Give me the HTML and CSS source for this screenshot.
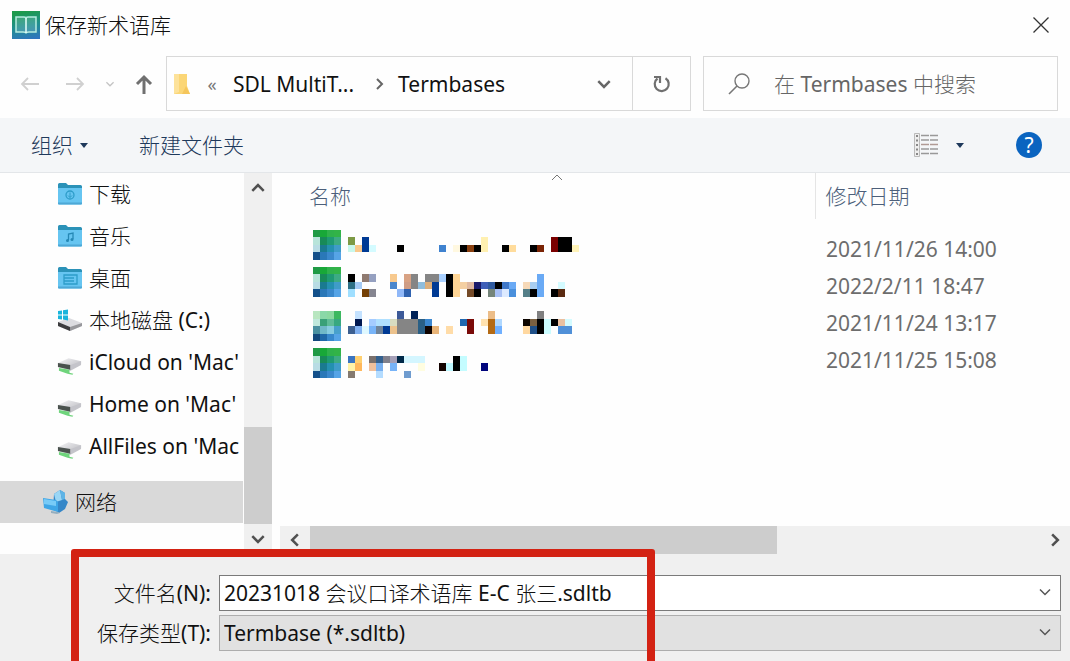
FILE: index.html
```html
<!DOCTYPE html>
<html lang="zh-CN">
<head>
    <meta charset="UTF-8">
    <meta name="viewport" content="width=device-width, initial-scale=1.0">
    <title>保存新术语库</title>
    <link rel="stylesheet" href="styles.css">
</head>
<body>
    <!-- 共用图标 -->
    <svg class="symbols" aria-hidden="true">
        <defs>
            <linearGradient id="appGradient" x1="0.6" y1="0" x2="0.8" y2="1">
                <stop offset="0" stop-color="#1d9a4c"/>
                <stop offset="0.5" stop-color="#1f8f90"/>
                <stop offset="1" stop-color="#2f74c0"/>
            </linearGradient>
            <linearGradient id="driveGradient" x1="0" y1="0" x2="1" y2="1">
                <stop offset="0" stop-color="#f4f4f6"/>
                <stop offset="1" stop-color="#b4b4ba"/>
            </linearGradient>
        </defs>
        <symbol id="chevron" viewBox="0 0 14 14">
            <path d="M2 4.5l5 5 5-5" fill="none" stroke="currentColor"/>
        </symbol>
        <symbol id="folder" viewBox="0 0 25 24">
            <path d="M1 2.5Q1 1 2.500 1H9l2 2h12.500Q25 3 25 4.500V10H1z" fill="#2b92b8"/>
            <path d="M1 6h24v15.500q0 1-1 1H2q-1 0-1-1z" fill="#66c5f1"/>
            <path d="M1 20.500h24v1q0 1-1 1H2q-1 0-1-1z" fill="#4da8d6"/>
        </symbol>
        <symbol id="drive" viewBox="0 0 26 20">
            <path d="M1 7L12 2l13 3v4L14 15 1 11z" fill="url(#driveGradient)"/>
            <path d="M1 7l13 2v5L1 11z" fill="#4a524e"/>
            <path d="M14 9l11-4v3l-11 6z" fill="#c4c4ca"/>
            <path d="M2 12l11 2v3l4 1-1 1-5-1-9-3z" fill="#6fd47c"/>
        </symbol>
    </svg>

    <div class="dialog">
        <header class="title-bar">
            <svg class="app-icon" viewBox="0 0 28 28">
                <rect width="28" height="28" fill="url(#appGradient)"/>
                <path d="M4 6h8q2 0 2 1.500Q14 6 16 6h8v15h-7q-3 0-3 1.500Q14 21 11 21H4z" fill="#ffffff" fill-opacity="0.15" stroke="#b5ecdf" stroke-width="1.500"/>
                <path d="M14 7v15" stroke="#e4fffb" stroke-width="1.500"/>
            </svg>
            <h1>保存新术语库</h1>
            <button type="button" class="close-button" aria-label="关闭">
                <svg viewBox="0 0 16 16"><path d="M0.500 0.500l15 15M15.500 0.500l-15 15" stroke="#333" stroke-width="1.300"/></svg>
            </button>
        </header>

        <div class="address-row">
            <nav class="nav-buttons">
                <button type="button" aria-label="后退"><svg viewBox="0 0 20 16"><path d="M19 8H2M8 2L2 8l6 6" fill="none" stroke="#d0d0d0" stroke-width="1.800"/></svg></button>
                <button type="button" class="forward" aria-label="前进"><svg viewBox="0 0 20 16"><path d="M1 8h17M12 2l6 6-6 6" fill="none" stroke="#d0d0d0" stroke-width="1.800"/></svg></button>
                <button type="button" class="recent" aria-label="最近"><svg viewBox="0 0 14 14"><use href="#chevron" stroke-width="1.800"/></svg></button>
                <button type="button" class="up" aria-label="向上"><svg viewBox="0 0 18 20"><path d="M9 20V3M2 10l7-7 7 7" fill="none" stroke="#707070" stroke-width="3"/></svg></button>
            </nav>
            <div class="address-bar">
                <svg class="path-folder" viewBox="0 0 18 22">
                    <path d="M1 1h13v12l3 8-16 0z" fill="#fbd676"/>
                    <path d="M1 1h5v18l-5 2z" fill="#fde29a"/>
                    <path d="M13 13l4 8H9z" fill="#f5c65c"/>
                </svg>
                <span class="path-more">«</span>
                <a href="#">SDL MultiT...</a>
                <svg class="path-arrow" viewBox="0 0 14 14"><path d="M5 2l5 5-5 5" fill="none" stroke="#666" stroke-width="2"/></svg>
                <a href="#">Termbases</a>
                <button type="button" class="path-drop" aria-label="展开"><svg viewBox="0 0 14 14"><use href="#chevron" stroke-width="2.200"/></svg></button>
                <button type="button" class="refresh" aria-label="刷新">
                    <svg viewBox="0 0 18 18">
                        <path d="M12.500 3.200A7 7 0 1 1 4.500 3.500" fill="none" stroke="#707070" stroke-width="2.200"/>
                        <path d="M1 2h6v6" fill="none" stroke="#707070" stroke-width="2.200"/>
                    </svg>
                </button>
            </div>
            <label class="search-box">
                <svg viewBox="0 0 22 22"><circle cx="14" cy="8" r="7" fill="none" stroke="#777" stroke-width="1.400"/><path d="M9 13l-8 8" stroke="#777" stroke-width="1.600"/></svg>
                <input type="text" placeholder="在 Termbases 中搜索" aria-label="搜索">
            </label>
        </div>

        <div class="toolbar">
            <button type="button" class="organize">组织<span class="triangle"></span></button>
            <button type="button">新建文件夹</button>
            <button type="button" class="view-button" aria-label="更改视图">
                <svg viewBox="0 0 26 24">
                    <path d="M0.500 0.500h5v23h-5z" fill="#eee" stroke="#bbb"/>
                    <path d="M2 3h2M2 7.500h2M2 12h2M2 16.500h2M2 21h2" stroke="#888" stroke-width="2"/>
                    <path d="M7 2.500h18M7 7h18M7 16h18M7 20.500h18" stroke="#999" stroke-width="1.300" stroke-dasharray="8 1"/>
                    <path d="M7 11.500h18" stroke="#b09a94" stroke-width="1.300" stroke-dasharray="8 1"/>
                </svg>
                <span class="triangle"></span>
            </button>
            <button type="button" class="help-button" aria-label="帮助">?</button>
        </div>

        <main class="browser">
            <aside class="sidebar">
                <ul class="tree">
                    <li><svg class="tree-icon" viewBox="0 0 25 24"><use href="#folder"/><circle cx="13" cy="13" r="4" fill="none" stroke="#2d9cc9" stroke-width="1.300"/><path d="M13 10.500v5M11 13.500l2 2 2-2" fill="none" stroke="#2d9cc9"/></svg>下载</li>
                    <li><svg class="tree-icon" viewBox="0 0 25 24"><use href="#folder"/><path d="M11.500 16v-6l4.500-1v6" fill="none" stroke="#2588b5" stroke-width="1.300"/><circle cx="10.500" cy="16.500" r="1.500" fill="#2588b5"/><circle cx="15" cy="15.500" r="1.500" fill="#2588b5"/></svg>音乐</li>
                    <li><svg class="tree-icon" viewBox="0 0 25 24"><use href="#folder"/><path d="M7 9h13v9H7zM7 12h10M7 15h10" fill="none" stroke="#2d9cc9" stroke-width="1.300"/></svg>桌面</li>
                    <li>
                        <svg class="tree-icon" viewBox="0 0 25 24">
                            <path d="M1 14l11-4 13 5v3l-12 5-12-5z" fill="#dcdce0"/>
                            <path d="M1 14l12 5v4L1 18z" fill="#3c3c3e"/>
                            <path d="M13 19l12-4v3l-12 5z" fill="#98989c"/>
                            <path d="M1 3l4-.6v4H1zM6 2.200L11 1.500v4.900H6zM1 7.400h4v4L1 11zM6 7.400h5v5l-5-.8z" fill="#19b5dc"/>
                        </svg>本地磁盘 (C:)
                    </li>
                    <li><svg class="tree-icon drive" viewBox="0 0 26 20"><use href="#drive"/></svg>iCloud on 'Mac'</li>
                    <li><svg class="tree-icon drive" viewBox="0 0 26 20"><use href="#drive"/></svg>Home on 'Mac'</li>
                    <li><svg class="tree-icon drive" viewBox="0 0 26 20"><use href="#drive"/></svg>AllFiles on 'Mac</li>
                    <li class="network">
                        <svg class="tree-icon" viewBox="0 0 25 24">
                            <path d="M11 4l6-4 5 3v6l3 3-3 7-6 4-6-4z" fill="#3587c8"/>
                            <path d="M11 4l6-4 2 10-6 2z" fill="#9ad6f5"/>
                            <path d="M17 0l5 3v6l-3 1z" fill="#5fb4e6"/>
                            <path d="M0 8l13 2 2 2v10L1 18z" fill="#3fa6e6"/>
                            <path d="M1 9l12 2v5L1 14z" fill="#78cbf7"/>
                            <path d="M8 21l7 1 2 1-3 1-6-1z" fill="#94aebf"/>
                        </svg>网络
                    </li>
                </ul>
                <div class="scroll-y">
                    <button type="button" aria-label="向上滚动"><svg class="flip" viewBox="0 0 14 14"><use href="#chevron" stroke-width="2.200"/></svg></button>
                    <div class="thumb"></div>
                    <button type="button" aria-label="向下滚动"><svg viewBox="0 0 14 14"><use href="#chevron" stroke-width="2.200"/></svg></button>
                </div>
            </aside>

            <section class="file-pane">
                <table class="file-table">
                    <thead>
                        <tr>
                            <th class="name">名称<svg class="sort-arrow" viewBox="0 0 12 7"><path d="M1 6l5-5 5 5" fill="none" stroke="#777"/></svg></th>
                            <th>修改日期</th>
                        </tr>
                    </thead>
                    <tbody>
                        <tr><td><svg class="mosaic" viewBox="0 0 39 5" preserveAspectRatio="none"></svg></td><td>2021/11/26 14:00</td></tr>
                        <tr><td><svg class="mosaic" viewBox="0 0 39 5" preserveAspectRatio="none"></svg></td><td>2022/2/11 18:47</td></tr>
                        <tr><td><svg class="mosaic" viewBox="0 0 39 5" preserveAspectRatio="none"></svg></td><td>2021/11/24 13:17</td></tr>
                        <tr><td><svg class="mosaic" viewBox="0 0 39 5" preserveAspectRatio="none"></svg></td><td>2021/11/25 15:08</td></tr>
                    </tbody>
                </table>
                <div class="scroll-x">
                    <button type="button" aria-label="向左滚动"><svg class="left" viewBox="0 0 14 14"><use href="#chevron" stroke-width="2.200"/></svg></button>
                    <div class="track"><div class="thumb"></div></div>
                    <button type="button" aria-label="向右滚动"><svg class="right" viewBox="0 0 14 14"><use href="#chevron" stroke-width="2.200"/></svg></button>
                </div>
            </section>
        </main>

        <form class="file-form">
            <label for="fileName">文件名(N):</label>
            <div class="field">
                <input type="text" id="fileName" value="20231018 会议口译术语库 E-C 张三.sdltb">
                <svg viewBox="0 0 14 14"><use href="#chevron" stroke-width="1.500"/></svg>
            </div>
            <label for="fileType">保存类型(T):</label>
            <div class="field">
                <select id="fileType">
                    <option>Termbase (*.sdltb)</option>
                </select>
                <svg viewBox="0 0 14 14"><use href="#chevron" stroke-width="1.500"/></svg>
            </div>
            <div class="highlight"></div>
        </form>
    </div>

    <script src="script.js"></script>
</body>
</html>
```
FILE: styles.css
```css
* {
    margin: 0;
    padding: 0;
    box-sizing: border-box;
}

body {
    font-family: 'Noto Sans', 'Noto Sans CJK SC Light', 'Noto Sans CJK SC', sans-serif;
    font-size: 21px;
    line-height: 28px;
    color: #111;
    background-color: #fefefe;
}

button,
input,
select {
    font: inherit;
    color: inherit;
    background: none;
    border: none;
    outline: none;
}

button {
    display: flex;
    align-items: center;
    justify-content: center;
}

svg {
    display: block;
    flex: none;
}

a {
    color: inherit;
    text-decoration: none;
}

.symbols {
    position: absolute;
    width: 0;
    height: 0;
}

.dialog {
    display: flex;
    flex-direction: column;
    min-height: 100vh;
    overflow: hidden;
}

/* 标题栏 */
.title-bar {
    display: flex;
    align-items: center;
    height: 50px;
    padding: 0 20px 0 12px;
    gap: 5px;
}

.title-bar h1 {
    font-size: 21px;
    font-weight: normal;
}

.app-icon {
    width: 28px;
    height: 28px;
}

.close-button {
    width: 18px;
    height: 28px;
    margin-left: auto;
}

.close-button svg {
    width: 16px;
    height: 16px;
}

/* 地址栏 */
.address-row {
    display: flex;
    height: 68px;
    padding: 6px 12px 7px 0;
}

.nav-buttons {
    display: flex;
    align-items: center;
    width: 166px;
    padding-left: 20px;
    gap: 20px;
}

.nav-buttons svg {
    width: 20px;
    height: 16px;
}

.nav-buttons .forward {
    margin-left: 5px;
}

.nav-buttons .recent {
    color: #c4c4c4;
}

.nav-buttons .recent svg {
    width: 10px;
    height: 10px;
}

.nav-buttons .up svg {
    width: 18px;
    height: 20px;
}

.address-bar {
    display: flex;
    align-items: center;
    flex: 1;
    border: 1px solid #d9d9d9;
}

.path-folder {
    width: 18px;
    height: 22px;
    margin-left: 6px;
}

.path-more {
    width: 42px;
    font-size: 18px;
    text-align: center;
    color: #777;
}

.path-arrow {
    width: 14px;
    height: 14px;
    margin: 0 12px 0 18px;
}

.path-drop {
    width: 56px;
    height: 100%;
    margin-left: auto;
    color: #666;
}

.path-drop svg {
    width: 16px;
    height: 16px;
}

.refresh {
    width: 58px;
    height: 100%;
    border-left: 1px solid #d9d9d9;
}

.refresh svg {
    width: 18px;
    height: 18px;
}

.search-box {
    display: flex;
    align-items: center;
    width: 355px;
    margin-left: 12px;
    padding-left: 24px;
    gap: 24px;
    border: 1px solid #d9d9d9;
}

.search-box svg {
    width: 22px;
    height: 22px;
}

.search-box input {
    flex: 1;
    min-width: 0;
}

.search-box input::placeholder {
    color: #666;
}

/* 工具栏 */
.toolbar {
    display: flex;
    align-items: center;
    height: 55px;
    padding: 0 28px 0 31px;
    background-color: #f4f6f8;
    border-bottom: 1px solid #e3e6e9;
    color: #1e395b;
}

.organize {
    gap: 7px;
    margin-right: 51px;
}

.triangle {
    border: 4px solid transparent;
    border-top: 5px solid #1e395b;
    border-bottom: none;
}

.view-button {
    gap: 16px;
    margin-left: auto;
    margin-right: 52px;
}

.view-button svg {
    width: 26px;
    height: 24px;
}

.help-button {
    width: 26px;
    height: 26px;
    border-radius: 50%;
    background-color: #0a64c0;
    color: white;
}

/* 左侧目录树 */
.browser {
    display: flex;
    flex: 1;
}

.sidebar {
    display: flex;
    width: 272px;
    margin-right: 8px;
}

.tree {
    width: 244px;
    list-style: none;
    overflow: hidden;
    border-right: 1px solid #fefefe;
}

.tree li {
    display: flex;
    align-items: center;
    height: 42px;
    padding-left: 57px;
    gap: 7px;
    white-space: nowrap;
}

.tree-icon {
    width: 25px;
    height: 24px;
}

.tree-icon.drive {
    height: 20px;
    margin-top: 8px;
}

.tree .network {
    margin-top: 14px;
    padding-left: 43px;
    background-color: #d9d9d9;
}

.scroll-y {
    display: flex;
    flex-direction: column;
    width: 28px;
    background-color: #f0f0f0;
    color: #505050;
}

.scroll-y button {
    width: 28px;
    height: 30px;
}

.scroll-y .thumb {
    height: 97px;
    margin-top: auto;
    background-color: #cdcdcd;
}

.scroll-y svg,
.scroll-x svg {
    width: 16px;
    height: 16px;
}

.flip {
    transform: rotate(180deg);
}

.left {
    transform: rotate(90deg);
}

.right {
    transform: rotate(-90deg);
}

/* 文件列表 */
.file-pane {
    display: flex;
    flex-direction: column;
    flex: 1;
    min-width: 0;
}

.file-table {
    width: calc(100% - 20px);
    margin-left: 20px;
    table-layout: fixed;
    border-collapse: collapse;
    color: #6d6d6d;
}

.file-table th {
    position: relative;
    height: 46px;
    padding-left: 10px;
    text-align: left;
    font-weight: normal;
    color: #4c5f7a;
}

.file-table .name {
    width: 515px;
    padding-left: 9px;
    border-right: 1px solid #e5e5e5;
}

.file-table tbody::before {
    content: '';
    display: block;
    height: 11px;
}

.file-table td {
    height: 37px;
    padding-left: 11px;
}

.sort-arrow {
    position: absolute;
    top: 1px;
    left: 50%;
    width: 12px;
    height: 7px;
    margin-left: -6px;
}

.mosaic {
    width: 273px;
    height: 37px;
    margin-left: 2px;
}

.scroll-x {
    display: flex;
    height: 28px;
    margin-top: auto;
    background-color: #f0f0f0;
    color: #505050;
}

.scroll-x button {
    width: 30px;
    height: 28px;
}

.scroll-x .track {
    flex: 1;
}

.scroll-x .thumb {
    width: 64%;
    height: 28px;
    background-color: #cdcdcd;
}

/* 文件名与保存类型 */
.file-form {
    position: relative;
    display: grid;
    grid-template-columns: 211px 1fr;
    align-items: center;
    gap: 4px 8px;
    padding: 21px 9px 10px 0;
    background-color: #f0f0f0;
}

.file-form label {
    text-align: right;
}

.field {
    position: relative;
}

.field input,
.field select {
    display: block;
    width: 100%;
    height: 36px;
    padding: 0 32px 2px 4px;
    border: 1px solid #7a7a7a;
    background-color: white;
    appearance: none;
}

.field select {
    padding-bottom: 0;
    border-color: #adadad;
    background-color: #e1e1e1;
}

.field svg {
    position: absolute;
    top: 10px;
    right: 9px;
    width: 14px;
    height: 14px;
    color: #555;
    pointer-events: none;
}

.highlight {
    position: absolute;
    top: -5px;
    bottom: -8px;
    left: 71px;
    width: 584px;
    border: 8px solid #d32213;
    border-radius: 3px;
    pointer-events: none;
}
```
FILE: script.js
```js
// 每个色块: [列, 行, 宽, 高, 颜色]
const icon = [
    ['#1f9a45', '#18a838', '#2fb14b', '#32b348'],
    ['#b8e4da', '#188a58', '#1f9a72', '#3cab83'],
    ['#b8dce4', '#1a7a90', '#2490b0', '#3f9cc8'],
    ['#13508a', '#2a78b8', '#3a88cc', '#56a4e6']
];

const paleIcon = [
    ['#b8e6c0', '#8ad8a8', '#8ad8a0', '#3cb860'],
    ['#c0e8dc', '#3aa078', '#60bc98', '#38a880'],
    ['#4a90a0', '#70b8c8', '#88cce0', '#48a0cc'],
    ['#13487c', '#2068a8', '#3888cc', '#56a4e6']
];

const files = [
    { icon: icon, top: 0, cells: [
        [5, 1, 1, 1, '#7d9a45'], [7, 1, 1, 2, '#003a94'], [5, 2, 1, 1, '#c8f8ec'], [6, 2, 1, 1, '#f9c98c'],
        [8, 2, 1, 1, '#d4fbff'], [12, 2, 1, 1, '#000'], [18, 2, 1, 1, '#3f82cf'], [20, 2, 1, 1, '#fff8e0'],
        [21, 2, 1, 1, '#000'], [22, 2, 1, 1, '#8a4010'], [23, 2, 1, 1, '#000'], [24, 1, 1, 2, '#fff0b0'],
        [27, 2, 1, 1, '#000'], [28, 2, 1, 1, '#ffdc9c'], [31, 2, 1, 1, '#000'], [32, 2, 1, 1, '#7a2405'],
        [34, 1, 1, 2, '#7a0000'], [35, 1, 2, 2, '#000'], [37, 2, 1, 1, '#fff3b8']
    ] },
    { icon: icon, top: 0, cells: [
        [5, 1, 1, 1, '#000'], [7, 1, 1, 1, '#8f7a70'], [8, 1, 1, 1, '#95a0c0'], [11, 1, 1, 1, '#f7c98e'],
        [13, 1, 1, 1, '#d8a283'], [14, 1, 1, 2, '#858585'], [16, 1, 2, 1, '#858585'], [18, 1, 1, 1, '#a9d0ff'],
        [19, 1, 1, 3, '#000'], [20, 1, 1, 3, '#ffd595'], [32, 1, 1, 3, '#6aaaf5'],
        [5, 2, 1, 1, '#2e6f84'], [6, 2, 1, 1, '#a5cbf5'], [11, 2, 1, 1, '#4a86cc'], [13, 2, 1, 1, '#cf9d85'],
        [15, 2, 1, 1, '#8fbddc'], [16, 2, 1, 1, '#dcae7a'], [17, 2, 1, 2, '#003a94'], [21, 2, 1, 1, '#f4cfa2'],
        [22, 2, 1, 1, '#e0b8a0'], [23, 2, 1, 1, '#1b1a6a'], [24, 2, 1, 1, '#3f5fb8'], [25, 2, 1, 1, '#2f5a9f'],
        [26, 2, 1, 1, '#000'], [27, 2, 1, 1, '#4078c8'], [28, 2, 1, 1, '#6aaaf5'], [30, 2, 1, 1, '#f6d9b8'],
        [31, 2, 1, 1, '#a8cdf0'], [35, 2, 1, 1, '#d4fbff'],
        [5, 3, 1, 1, '#a0dfff'], [7, 3, 1, 1, '#744005'], [8, 3, 1, 1, '#858590'], [12, 3, 1, 1, '#90b8f8'],
        [13, 3, 1, 1, '#2f62b0'], [22, 3, 1, 1, '#744a28'], [23, 3, 1, 1, '#000'], [25, 3, 1, 1, '#75857a'],
        [26, 3, 1, 1, '#a8c0f5'], [27, 3, 1, 1, '#ddeaff'], [28, 3, 1, 1, '#4a90dc'], [30, 3, 1, 1, '#557f88'],
        [31, 3, 1, 1, '#000'], [34, 3, 1, 1, '#000'], [35, 3, 1, 1, '#5a2a10']
    ] },
    { icon: paleIcon, top: 1, cells: [
        [6, 1, 1, 1, '#c4e2ff'], [12, 1, 1, 1, '#3d5a98'], [14, 1, 1, 1, '#002258'], [25, 1, 1, 1, '#ecbd88'],
        [32, 1, 1, 1, '#808080'],
        [6, 2, 1, 1, '#001850'], [8, 2, 1, 1, '#a5ccff'], [9, 2, 2, 1, '#b0e0ff'], [11, 2, 1, 1, '#d8dcc0'],
        [12, 2, 3, 2, '#858585'], [15, 2, 1, 2, '#2a5f85'], [16, 2, 1, 1, '#3c88d0'], [21, 2, 1, 1, '#1f68b0'],
        [22, 2, 1, 2, '#7a0a08'], [24, 2, 1, 1, '#ffe2b0'], [25, 2, 1, 2, '#b46a14'], [26, 2, 1, 1, '#b0d8ff'],
        [30, 2, 1, 1, '#0c0500'], [31, 2, 1, 1, '#7a6040'], [32, 2, 1, 2, '#000'], [33, 2, 1, 2, '#ccfcff'],
        [34, 2, 1, 1, '#000'], [35, 2, 1, 1, '#eac0a0'], [36, 2, 1, 1, '#d4fbff'],
        [5, 3, 1, 1, '#3c5f90'], [6, 3, 1, 1, '#80b0f0'], [7, 3, 1, 1, '#dff8ff'], [8, 3, 1, 1, '#78b4f8'],
        [9, 3, 1, 1, '#70849a'], [10, 3, 1, 1, '#003a94'], [11, 3, 1, 1, '#ecc28c'], [16, 3, 1, 1, '#100400'],
        [17, 3, 1, 1, '#e8b478'], [19, 3, 1, 1, '#ffdca8'], [26, 3, 1, 1, '#70b0ff'], [30, 3, 1, 1, '#ffd8a0'],
        [31, 3, 1, 1, '#1f5088'], [35, 3, 2, 1, '#5090d8']
    ] },
    { icon: icon, top: 1, cells: [
        [5, 2, 1, 1, '#3a74c0'], [6, 2, 1, 1, '#ffd070'], [8, 2, 1, 1, '#7a706c'], [9, 2, 1, 1, '#33608e'],
        [10, 2, 1, 1, '#80808c'], [11, 2, 1, 1, '#a5a0b8'], [12, 2, 1, 1, '#002848'], [13, 2, 3, 1, '#d4f6ff'],
        [20, 2, 1, 2, '#000'], [21, 2, 1, 2, '#c4fcff'],
        [5, 3, 1, 1, '#fff3a8'], [6, 3, 1, 1, '#ffb85c'], [8, 3, 1, 1, '#f0c09c'], [9, 3, 1, 1, '#78b0f0'],
        [11, 3, 1, 1, '#78b4f8'], [15, 3, 1, 1, '#fffde0'], [18, 3, 1, 1, '#140300'], [19, 3, 1, 1, '#bff8ff'],
        [24, 3, 1, 1, '#00057c'],
        [5, 4, 1, 1, '#857a70'], [9, 4, 1, 1, '#b4dcff'], [13, 4, 1, 1, '#6f9ccf']
    ] }
];

function addCell(svg, x, y, w, h, color) {
    const rect = document.createElementNS('http://www.w3.org/2000/svg', 'rect');
    rect.setAttribute('x', x);
    rect.setAttribute('y', y);
    rect.setAttribute('width', w);
    rect.setAttribute('height', h);
    rect.setAttribute('fill', color);
    rect.setAttribute('shape-rendering', 'crispEdges');
    svg.appendChild(rect);
}

document.querySelectorAll('.mosaic').forEach((svg, i) => {
    const file = files[i];
    file.icon.forEach((row, y) => {
        row.forEach((color, x) => addCell(svg, x, y + file.top, 1, 1, color));
    });
    file.cells.forEach((cell) => addCell(svg, ...cell));
});
```
